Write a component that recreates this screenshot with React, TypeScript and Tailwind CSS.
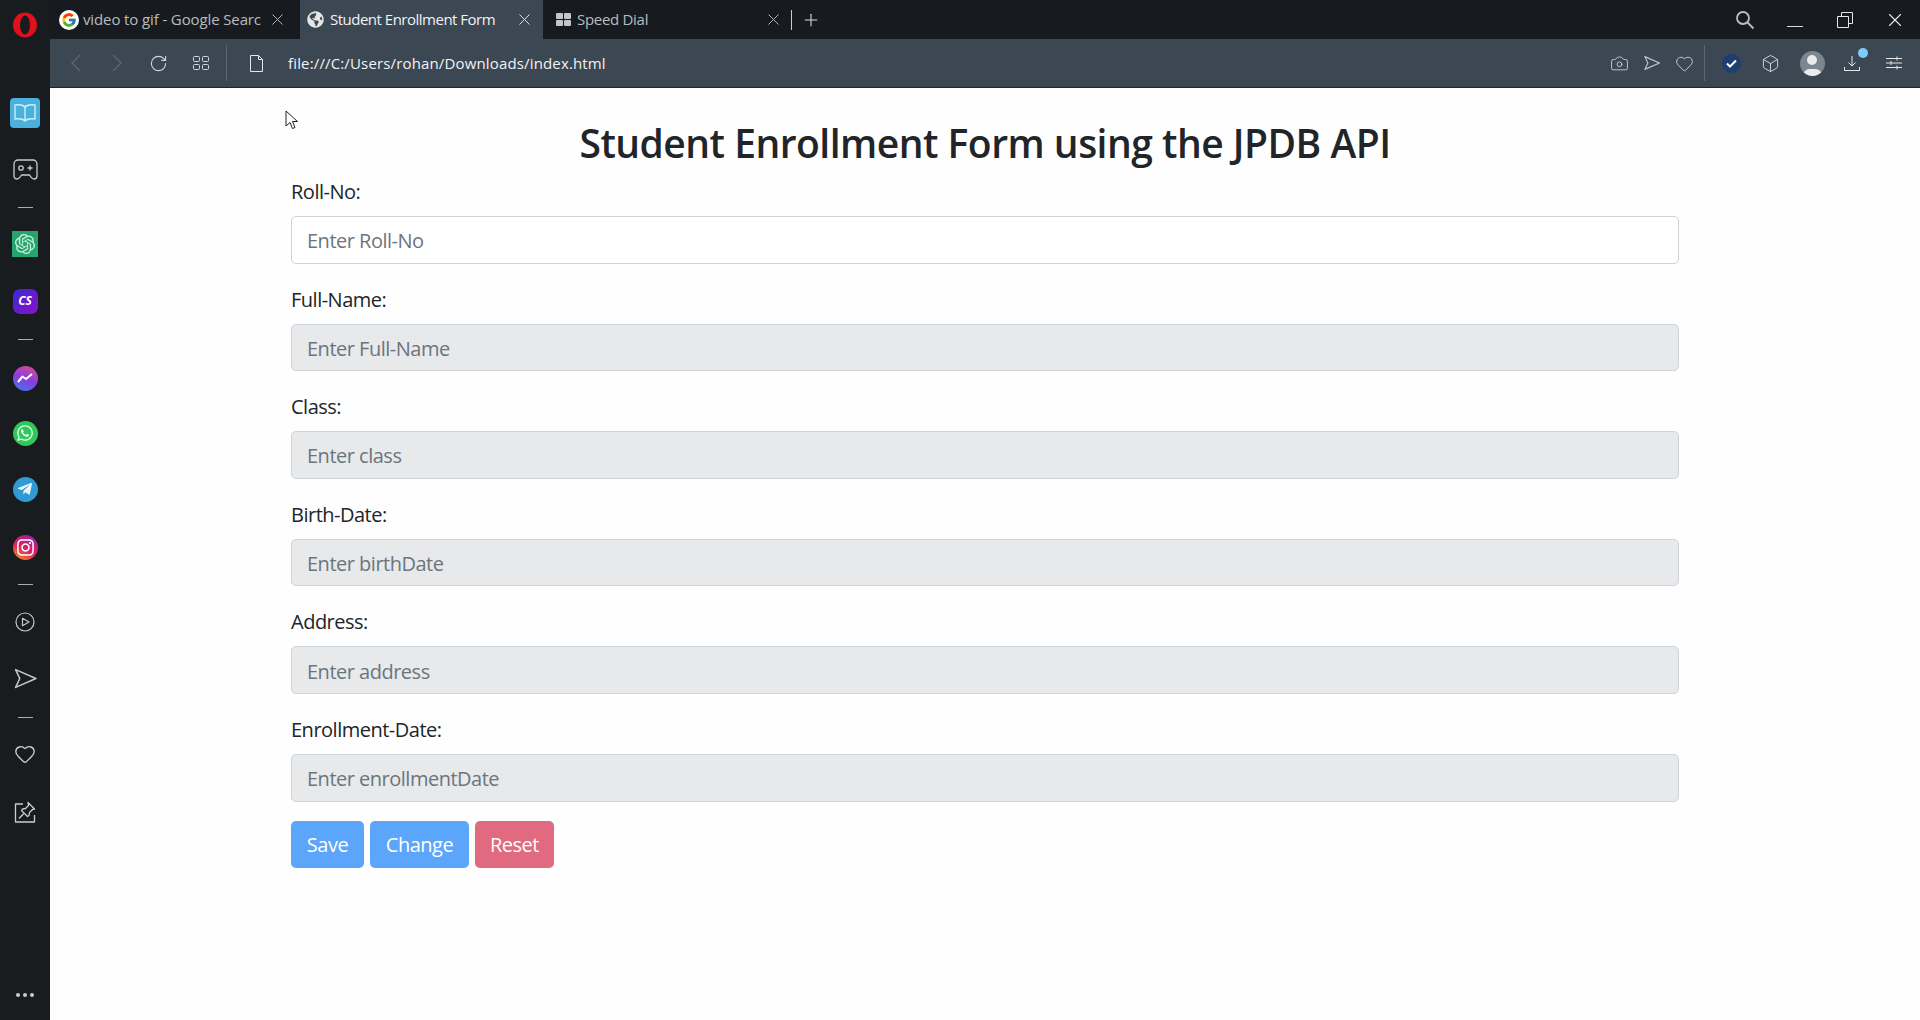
import { FaGlobeAmericas, FaInstagram, FaTelegramPlane, FaWhatsapp } from "react-icons/fa";
import { FcGoogle } from "react-icons/fc";
import { SiOpenai } from "react-icons/si";
import { Box, Camera, Heart, Plus, RotateCw, X } from "lucide-react";

const Slot = ({ className = "", children }: { className?: string; children?: React.ReactNode }) => (
  <div className={`w-[30px] h-[30px] flex items-center justify-center shrink-0 ${className}`}>{children}</div>
);

const Dash = ({ className = "" }: { className?: string }) => (
  <Slot className={className}>
    <div className="w-[15px] h-px bg-[#a9adaf]" />
  </Slot>
);

const SendIcon = ({ size, stroke = "#c3c7c9" }: { size: number; stroke?: string }) => (
  <svg width={size} height={size} viewBox="0 0 24 24" fill="none" stroke={stroke} strokeWidth="1.5" strokeLinejoin="round">
    <path d="M2.5 3.5 22 12 2.5 20.5 6.5 12Z" />
  </svg>
);

const fields = [
  { label: "Roll-No:", placeholder: "Enter Roll-No", enabled: true },
  { label: "Full-Name:", placeholder: "Enter Full-Name" },
  { label: "Class:", placeholder: "Enter class" },
  { label: "Birth-Date:", placeholder: "Enter birthDate" },
  { label: "Address:", placeholder: "Enter address" },
  { label: "Enrollment-Date:", placeholder: "Enter enrollmentDate" },
];

const Sidebar = () => (
  <aside className="w-[50px] shrink-0 bg-[#191c1f] flex flex-col items-center">
    <Slot className="mt-[10px]">
      <svg width="26" height="26" viewBox="0 0 26 26">
        <ellipse cx="13" cy="13" rx="12" ry="12.5" fill="#e0101f" />
        <ellipse cx="13" cy="13" rx="5" ry="9.5" fill="#191c1f" />
      </svg>
    </Slot>
    <Slot className="mt-[58px] bg-[#4ab0dc] rounded-[4px]">
      <svg width="24" height="22" viewBox="0 0 24 22" fill="none" stroke="#cdeefa" strokeWidth="1.4" strokeLinejoin="round">
        <path d="M12 5C10 3 6 2.500 2 3v14c4-.5 8 0 10 2 2-2 6-2.500 10-2V3c-4-.5-8 0-10 2Z" />
        <path d="M12 5v14" />
      </svg>
    </Slot>
    <Slot className="mt-[26px]">
      <svg width="25" height="21" viewBox="0 0 25 21" fill="none" stroke="#c9cccd" strokeWidth="1.3" strokeLinejoin="round">
        <path d="M5 1h15a4 4 0 0 1 4 4v12c0 2-1.500 3-3 3-1 0-2-.6-3-1.800L16.500 16h-8L7 18.200C6 19.400 5 20 4 20c-1.500 0-3-1-3-3V5a4 4 0 0 1 4-4Z" />
        <circle cx="8" cy="9" r="2.200" />
        <path d="M17 6.500v5M14.500 9h5" />
      </svg>
    </Slot>
    <Dash className="mt-[8px]" />
    <Slot className="mt-[7px]">
      <div className="w-[26px] h-[26px] bg-[#27a36f] flex items-center justify-center">
        <SiOpenai size={20} color="#c9f2df" />
      </div>
    </Slot>
    <Slot className="mt-[27px]">
      <div className="w-[25px] h-[25px] rounded-[7px] bg-[linear-gradient(135deg,#3a2ad0,#8a10c8)] flex items-center justify-center text-white text-[12px] font-bold italic font-['Open_Sans',sans-serif]">
        CS
      </div>
    </Slot>
    <Dash className="mt-[8px]" />
    <Slot className="mt-[9px]">
      <div className="w-[25px] h-[25px] rounded-full bg-[linear-gradient(200deg,#e0508c,#8a3cdc_50%,#3a7cf0)] flex items-center justify-center">
        <svg width="16" height="10" viewBox="0 0 16 10" fill="none" stroke="#fff" strokeWidth="2" strokeLinejoin="round">
          <path d="M1 9l4.500-5.500L9 6l6-5" />
        </svg>
      </div>
    </Slot>
    <Slot className="mt-[25px]">
      <div className="w-[25px] h-[25px] rounded-full bg-[#2fc85a] flex items-center justify-center">
        <FaWhatsapp size={18} color="#eafff0" />
      </div>
    </Slot>
    <Slot className="mt-[26px]">
      <div className="w-[25px] h-[25px] rounded-full bg-[#2f9ad4] flex items-center justify-center">
        <FaTelegramPlane size={16} color="#e8f6fd" />
      </div>
    </Slot>
    <Slot className="mt-[28px]">
      <div className="w-[25px] h-[25px] rounded-full bg-[linear-gradient(30deg,#f2a020,#e02060_45%,#9020b0)] flex items-center justify-center">
        <FaInstagram size={19} color="#fff" />
      </div>
    </Slot>
    <Dash className="mt-[7px]" />
    <Slot className="mt-[8px]">
      <svg width="20" height="20" viewBox="0 0 20 20" fill="none" stroke="#c3c7c9" strokeWidth="1.2" strokeLinejoin="round">
        <circle cx="10" cy="10" r="9" />
        <path d="M7.500 6.300 14 10l-6.500 3.700Z" />
      </svg>
    </Slot>
    <Slot className="mt-[26px]">
      <SendIcon size={25} />
    </Slot>
    <Dash className="mt-[9px]" />
    <Slot className="mt-[7px]">
      <Heart size={22} color="#c9cccd" strokeWidth={1.5} />
    </Slot>
    <Slot className="mt-[28px]">
      <svg width="22" height="22" viewBox="0 0 22 22" fill="none" stroke="#c9cccd" strokeWidth="1.3" strokeLinejoin="round">
        <path d="M9 3H1.500v18h19v-7" />
        <path d="M14 1.500 20.500 8l-2 .5-3 3-.5 3-1.500 1-6-6 1-1.500 3-.5 3-3Z" />
        <path d="M9.800 12.500 5 17.500" />
      </svg>
    </Slot>
    <Slot className="mt-auto mb-[10px] gap-[3px]">
      <div className="w-[4px] h-[4px] rounded-full bg-[#c9cccd]" />
      <div className="w-[4px] h-[4px] rounded-full bg-[#c9cccd]" />
      <div className="w-[4px] h-[4px] rounded-full bg-[#c9cccd]" />
    </Slot>
  </aside>
);

const TabBar = () => (
  <div className="h-[39px] shrink-0 bg-[#171b20] flex items-stretch text-[15px] font-['Open_Sans',sans-serif]">
    <div className="w-[250px] flex items-center pl-[9px] text-[#b9bcbf]">
      <div className="w-[20px] h-[20px] rounded-full bg-white flex items-center justify-center shrink-0">
        <FcGoogle size={16} />
      </div>
      <div className="ml-[4px] w-[178px] whitespace-nowrap tracking-[-0.12px]">video to gif - Google Searc</div>
      <X size={19} strokeWidth={1.2} color="#b9bcbf" className="ml-[7px]" />
    </div>
    <div className="w-[243px] bg-[#3c4754] flex items-center pl-[7px] text-[#f1f2f3]">
      <FaGlobeAmericas size={17} color="#e4e6e8" className="shrink-0" />
      <div className="ml-[6px] whitespace-nowrap tracking-[-0.5px]">Student Enrollment Form</div>
      <X size={19} strokeWidth={1.2} color="#e4e6e8" className="ml-auto mr-[9px]" />
    </div>
    <div className="w-[240px] flex items-center pl-[13px] text-[#b9bcbf]">
      <div className="grid grid-cols-2 gap-[1px] shrink-0">
        <div className="w-[7px] h-[6px] rounded-[1px] bg-[#c3c7c9]" />
        <div className="w-[7px] h-[6px] rounded-[1px] bg-[#c3c7c9]" />
        <div className="w-[7px] h-[6px] rounded-[1px] bg-[#c3c7c9]" />
        <div className="w-[7px] h-[6px] rounded-[1px] bg-[#c3c7c9]" />
      </div>
      <div className="ml-[6px] whitespace-nowrap tracking-[-0.3px]">Speed Dial</div>
      <X size={19} strokeWidth={1.2} color="#b9bcbf" className="ml-auto" />
    </div>
    <div className="self-center ml-[8px] w-px h-[20px] bg-[#c9cccd]" />
    <Plus size={20} strokeWidth={1.3} color="#d8dadc" className="self-center ml-[9px]" />
    <div className="ml-auto mr-[10px] flex items-center gap-[20px]">
      <Slot>
        <svg width="20" height="20" viewBox="0 0 20 20" fill="none" stroke="#bcbfc1" strokeWidth="1.8">
          <circle cx="8" cy="8" r="6" />
          <path d="M12.500 12.500 18.500 18.500" />
        </svg>
      </Slot>
      <Slot>
        <div className="w-[16px] h-px bg-[#d8dadc] mt-[14px]" />
      </Slot>
      <Slot>
        <svg width="16" height="16" viewBox="0 0 16 16" fill="none" stroke="#e4e6e8" strokeWidth="1">
          <path d="M.5 4.500h11v11H.5z" />
          <path d="M4.500 4.500v-4h11v11h-4" />
        </svg>
      </Slot>
      <Slot>
        <X size={22} strokeWidth={1.2} color="#e4e6e8" />
      </Slot>
    </div>
  </div>
);

const Toolbar = () => (
  <div className="h-[49px] shrink-0 bg-[#3c4754] flex items-center pl-[11px] pr-[11px] border-b border-[#20262c] font-['Open_Sans',sans-serif]">
    <Slot>
      <svg width="10" height="18" viewBox="0 0 10 18" fill="none" stroke="#5d6773" strokeWidth="1.3">
        <path d="M9 1 1 9l8 8" />
      </svg>
    </Slot>
    <Slot className="ml-[11px]">
      <svg width="10" height="18" viewBox="0 0 10 18" fill="none" stroke="#5d6773" strokeWidth="1.3">
        <path d="m1 1 8 8-8 8" />
      </svg>
    </Slot>
    <Slot className="ml-[11px]">
      <RotateCw size={19} strokeWidth={1.4} color="#d3d6d9" />
    </Slot>
    <Slot className="ml-[13px]">
      <svg width="16" height="16" viewBox="0 0 16 16" fill="none" stroke="#d3d6d9" strokeWidth="1">
        <rect x=".5" y="1.500" width="6" height="5" rx="1" />
        <rect x="9.500" y="1.500" width="6" height="5" rx="1" />
        <rect x=".5" y="9.500" width="6" height="5" rx="1" />
        <rect x="9.500" y="9.500" width="6" height="5" rx="1" />
      </svg>
    </Slot>
    <div className="ml-[10px] w-px h-[36px] bg-[#5d6773]" />
    <Slot className="ml-[14px]">
      <svg width="13" height="17" viewBox="0 0 13 17" fill="none" stroke="#e4e6e8" strokeWidth="1" strokeLinejoin="round">
        <path d="M.5.5h8l4 4v12H.5Z" />
        <path d="M8.500.5v4h4" />
      </svg>
    </Slot>
    <div className="ml-[17px] text-[15px] text-[#f1f2f3] whitespace-nowrap tracking-[0.15px]">file:///C:/Users/rohan/Downloads/index.html</div>
    <Slot className="ml-auto">
      <Camera size={19} strokeWidth={1.1} color="#d3d6d9" />
    </Slot>
    <Slot className="ml-[3px]">
      <SendIcon size={18} />
    </Slot>
    <Slot className="ml-[2px]">
      <Heart size={19} strokeWidth={1.1} color="#d3d6d9" />
    </Slot>
    <div className="ml-[5px] w-px h-[36px] bg-[#5d6773]" />
    <Slot className="ml-[11px]">
      <div className="w-[19px] h-[19px] rounded-full bg-[#1d3f6e] flex items-center justify-center">
        <svg width="11" height="9" viewBox="0 0 11 9" fill="none" stroke="#fff" strokeWidth="2">
          <path d="m1 4.500 3 3 6-6" />
        </svg>
      </div>
    </Slot>
    <Slot className="ml-[9px]">
      <Box size={19} strokeWidth={1.1} color="#e4e6e8" />
    </Slot>
    <Slot className="ml-[12px]">
      <div className="w-[25px] h-[25px] rounded-full bg-[#7d858e] overflow-hidden relative flex justify-center">
        <div className="w-[10px] h-[10px] rounded-full bg-[#e9ebec] mt-[4px]" />
        <div className="absolute bottom-[-6px] w-[19px] h-[13px] rounded-full bg-[#e9ebec]" />
      </div>
    </Slot>
    <Slot className="ml-[10px] relative">
      <svg width="16" height="16" viewBox="0 0 16 16" fill="none" stroke="#e4e6e8" strokeWidth="1">
        <path d="M8 1v10M4.500 7.500 8 11l3.500-3.500M.5 12v3.500h15V12" />
      </svg>
      <div className="absolute right-[-1px] top-0 w-[10px] h-[10px] rounded-full bg-[#80cbf8]" />
    </Slot>
    <Slot className="ml-[12px]">
      <svg width="16" height="14" viewBox="0 0 16 14" fill="none" stroke="#e4e6e8" strokeWidth="1">
        <path d="M0 2.500h16M0 7h16M0 11.500h16M11 .5v4M5 5v4M11 9.500v4" />
      </svg>
    </Slot>
  </div>
);

export default function App() {
  return (
    <div className="h-screen flex overflow-hidden bg-[#fefefe] relative">
      <Sidebar />
      <div className="flex-1 flex flex-col min-w-0">
        <TabBar />
        <Toolbar />
        <main className="flex-1 pt-[31px] px-[241px] text-[#212529] font-['Open_Sans',sans-serif] tracking-[-0.5px]">
          <h3 className="text-[39px] leading-[48px] font-semibold text-center mb-[9px] tracking-[-0.5px]">Student Enrollment Form using the JPDB API</h3>
          {fields.map((f) => (
            <div key={f.label} className="mb-[20px]">
              <label className="block text-[20px] leading-[32px] mb-[8px]">{f.label}</label>
              <input
                className={`block w-full h-[47.600px] pl-[15px] pr-[15px] pt-[2px] text-[20px] rounded-[5px] border border-[#ced4da] placeholder:text-[#6c757d] ${
                  f.enabled ? "bg-white" : "bg-[#e7e9eb]"
                }`}
                placeholder={f.placeholder}
                disabled={!f.enabled}
              />
            </div>
          ))}
          <div className="flex gap-[6px] -mt-px">
            <button className="h-[47.600px] w-[73px] pt-[2px] text-[20px] text-white rounded-[5px] bg-[#5ba6fb]">Save</button>
            <button className="h-[47.600px] w-[99px] pt-[2px] text-[20px] text-white rounded-[5px] bg-[#5ba6fb]">Change</button>
            <button className="h-[47.600px] w-[79px] pt-[2px] text-[20px] text-white rounded-[5px] bg-[#e06a80]">Reset</button>
          </div>
        </main>
      </div>
      <svg className="absolute left-[285px] top-[110px]" width="15" height="20" viewBox="0 0 15 20" fill="#fff" stroke="#222" strokeWidth="1">
        <path d="M1 1v15l4-3.500 2.500 6 2.500-1-2.500-6h5Z" />
      </svg>
    </div>
  );
}
